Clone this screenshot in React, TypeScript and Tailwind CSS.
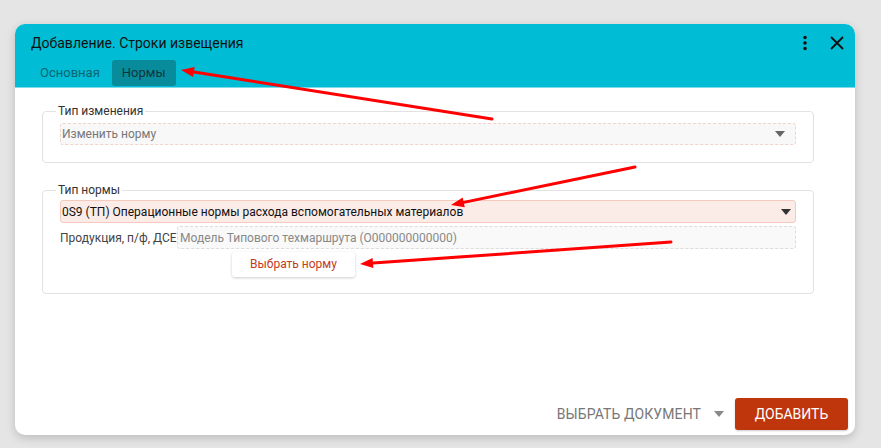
import React from 'react';

const Caret: React.FC<{ className?: string }> = ({ className }) => (
  <svg width="10" height="6" viewBox="0 0 10 6" className={className}>
    <path d="M0 0 L10 0 L5 6 Z" fill="currentColor" />
  </svg>
);

const Arrow: React.FC<{ x1: number; y1: number; x2: number; y2: number }> = ({ x1, y1, x2, y2 }) => {
  const a = Math.atan2(y2 - y1, x2 - x1);
  const len = 13;
  const w = 5;
  const bx = x2 - len * Math.cos(a);
  const by = y2 - len * Math.sin(a);
  const px = -Math.sin(a) * w;
  const py = Math.cos(a) * w;
  return (
    <g>
      <line x1={x1} y1={y1} x2={bx} y2={by} stroke="#ff0000" strokeWidth="3" strokeLinecap="round" />
      <polygon points={`${x2},${y2} ${bx + px},${by + py} ${bx - px},${by - py}`} fill="#ff0000" />
    </g>
  );
};

const App: React.FC = () => {
  return (
    <div className="relative w-[881px] h-[448px] bg-[#e5e5e5] overflow-hidden" style={{ fontFamily: 'Roboto, "Liberation Sans", sans-serif' }}>
      <div className="absolute left-[15px] top-[24px] w-[840px] h-[411px] bg-white rounded-[10px] shadow-[0_3px_10px_rgba(0,0,0,0.18)] flex flex-col overflow-hidden">
        {/* Шапка */}
        <div className="h-[64px] bg-[#00bcd4] flex flex-col border-b border-[#7fdbe8]">
          <div className="flex items-center h-[36px] pl-[16px] pr-[10px]">
            <span className="text-[14px] text-[#111] flex-1 pt-[2px]">Добавление. Строки извещения</span>
            <svg width="6" height="16" viewBox="0 0 6 16" className="mr-[22px] mt-[2px]">
              <circle cx="3" cy="2.5" r="1.8" fill="#111" />
              <circle cx="3" cy="8" r="1.8" fill="#111" />
              <circle cx="3" cy="13.5" r="1.8" fill="#111" />
            </svg>
            <svg width="14" height="14" viewBox="0 0 14 14" className="mr-[1px] mt-[2px]">
              <path d="M1 1 L13 13 M13 1 L1 13" stroke="#111" strokeWidth="1.8" />
            </svg>
          </div>
          <div className="flex items-start pl-[17px] gap-[4px]">
            <div className="h-[25px] px-[8px] flex items-center text-[13px] text-[#0a6570]">Основная</div>
            <div className="h-[26px] px-[10px] flex items-center text-[13px] text-[#10353b] bg-[#088c9b] rounded-[3px]">Нормы</div>
          </div>
        </div>

        {/* Тело */}
        <div className="flex-1 flex flex-col pl-[27px] pr-[41px] pt-[16px]">
          <fieldset className="border border-[#e2e2e2] rounded-[4px] px-[17px] pb-[17px] pt-0">
            <legend className="-ml-[4px] px-[2px] text-[12px] text-[#333] leading-[14px]">Тип изменения</legend>
            <div className="mt-[5px] h-[22px] border border-dashed border-[#f2d3cc] rounded-[3px] bg-[#f8f8f8] flex items-center pl-[1px] pr-[10px]">
              <span className="flex-1 text-[12px] text-[#777]">Изменить норму</span>
              <Caret className="text-[#666]" />
            </div>
          </fieldset>

          <fieldset className="mt-[20px] border border-[#e2e2e2] rounded-[4px] px-[17px] pb-[16px] pt-0">
            <legend className="-ml-[4px] px-[2px] text-[12px] text-[#333] leading-[14px]">Тип нормы</legend>
            <div className="mt-[3px] h-[23px] border border-[#f5c9bd] rounded-[3px] bg-[#fbece8] flex items-center pl-[1px] pr-[4px]">
              <span className="flex-1 text-[12px] text-[#111]">0S9 (ТП) Операционные нормы расхода вспомогательных материалов</span>
              <Caret className="text-[#333]" />
            </div>
            <div className="mt-[3px] flex items-center">
              <span className="w-[117px] text-[12px] text-[#444] whitespace-nowrap">Продукция, п/ф, ДСЕ</span>
              <div className="flex-1 h-[23px] border border-dashed border-[#dcdcdc] rounded-[3px] bg-[#f9f9f9] flex items-center px-[2px]">
                <span className="text-[12px] text-[#888]">Модель Типового техмаршрута (O000000000000)</span>
              </div>
            </div>
            <div className="mt-[2px] ml-[172px]">
              <button className="h-[25px] w-[123px] bg-white rounded-[3px] shadow-[0_1px_3px_rgba(0,0,0,0.2)] text-[12px] text-[#c23b1c]">Выбрать норму</button>
            </div>
          </fieldset>

          <div className="mt-auto flex items-center justify-end pb-[5px] -mr-[34px]">
            <span className="text-[14px] text-[#777] uppercase tracking-[0.1px]">Выбрать документ</span>
            <Caret className="text-[#888] ml-[13px] mr-[11px]" />
            <button className="h-[32px] w-[113px] bg-[#bf360c] text-white text-[14px] rounded-[3px] uppercase shadow-[0_1px_2px_rgba(0,0,0,0.2)]">Добавить</button>
          </div>
        </div>
      </div>

      <svg className="absolute inset-0 pointer-events-none" width="881" height="448">
        <Arrow x1={492} y1={119} x2={181} y2={70} />
        <Arrow x1={635} y1={167} x2={451} y2={205} />
        <Arrow x1={671} y1={242} x2={360} y2={264} />
      </svg>
    </div>
  );
};

export default App;
